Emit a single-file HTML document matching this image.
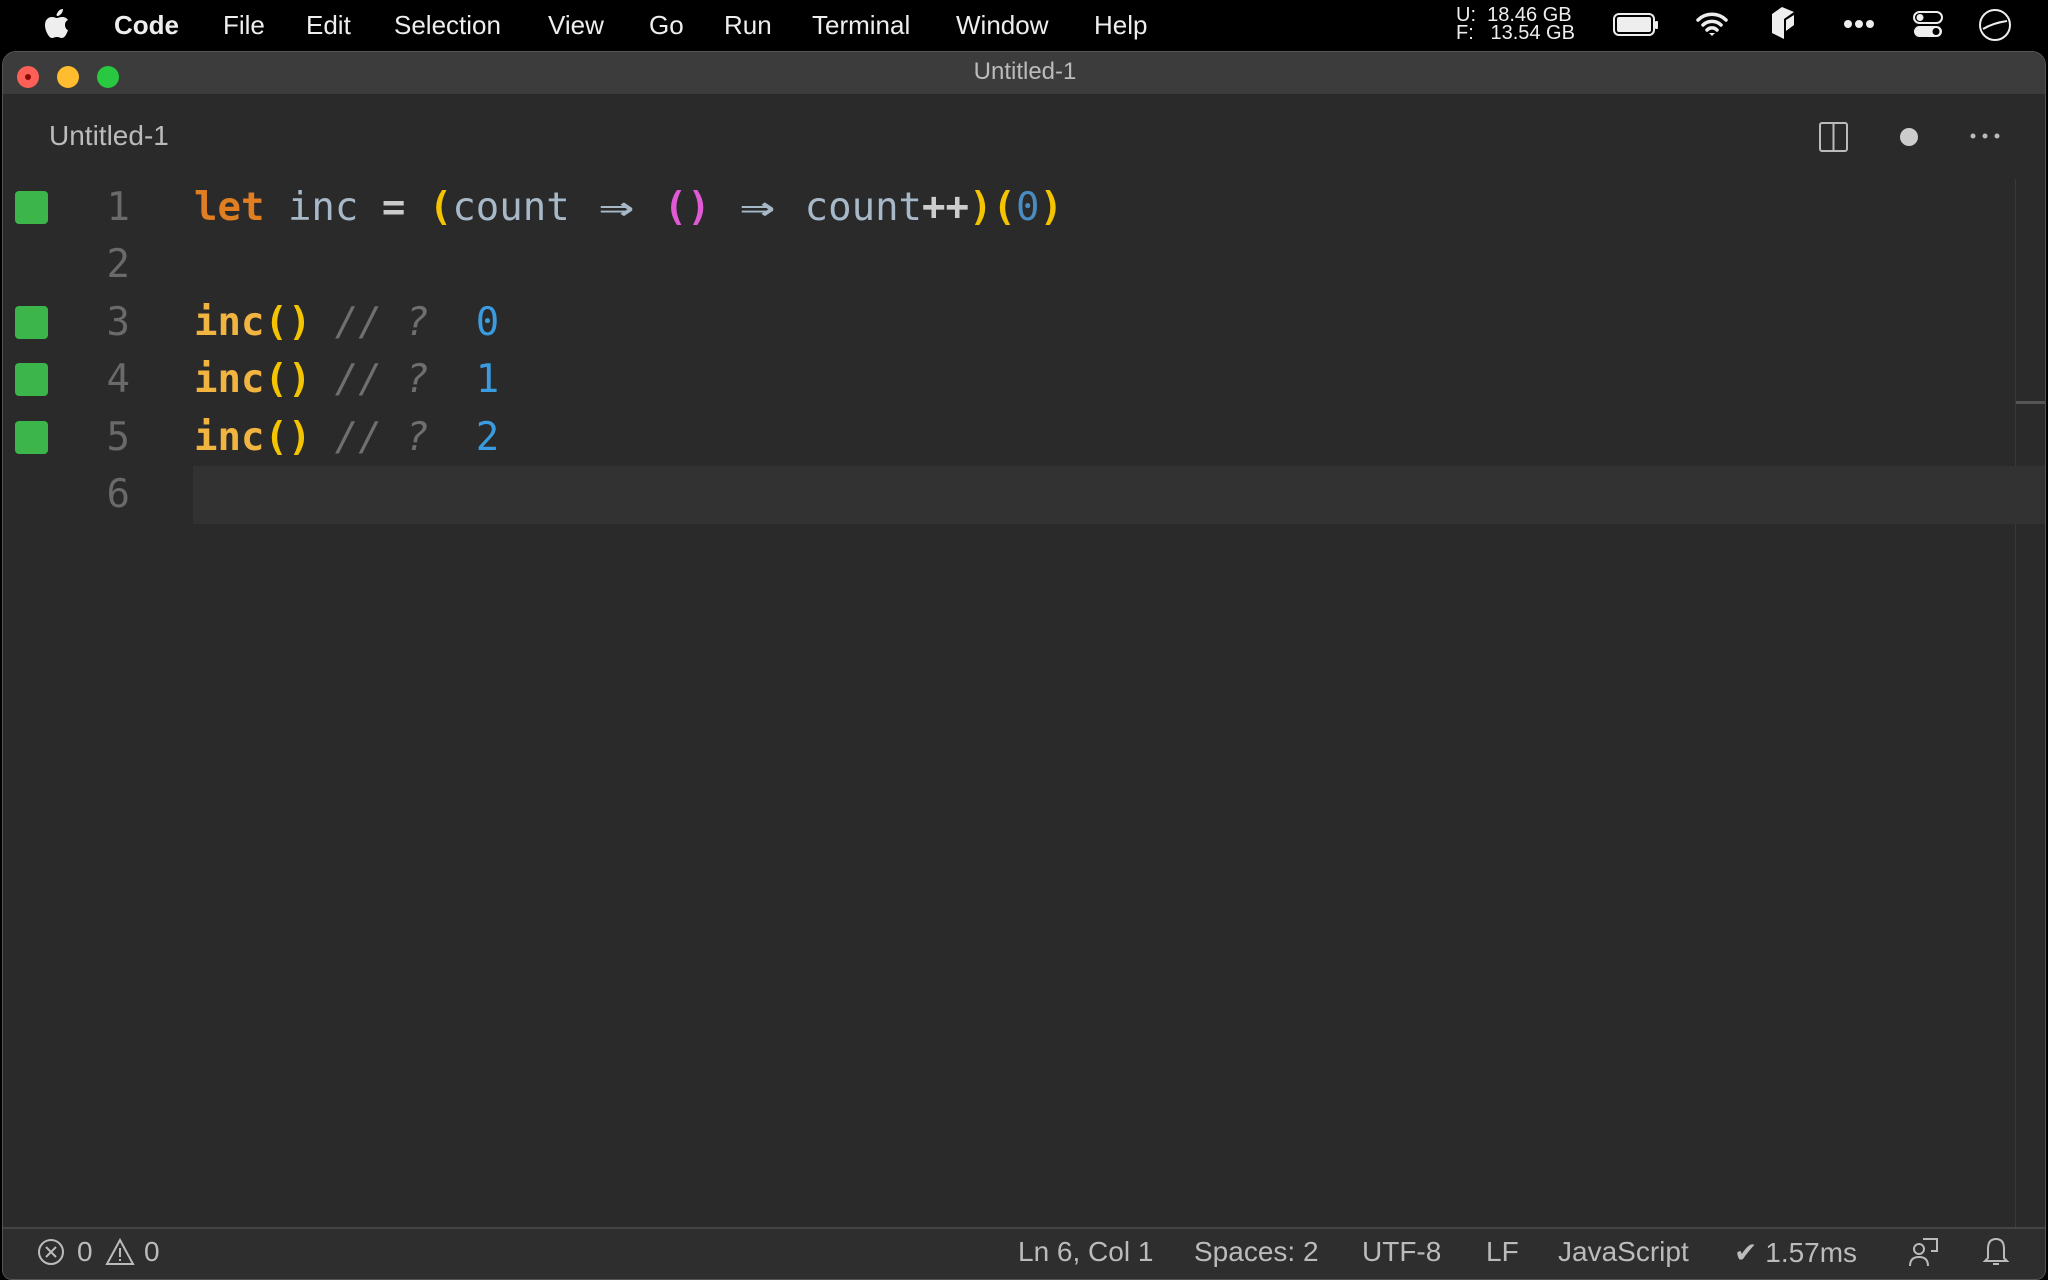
<!DOCTYPE html>
<html><head><meta charset="utf-8"><style>
*{margin:0;padding:0;box-sizing:border-box}
body{width:2048px;height:1280px;background:#000;position:relative;overflow:hidden;font-family:"Liberation Sans",sans-serif}
.a{position:absolute;white-space:nowrap}
.menu{top:10px;font-size:26px;color:#eee}
.win{left:2px;top:51px;width:2044px;height:1229px;background:#2a2a2a;border-radius:14px 14px 10px 10px;overflow:hidden;border:1px solid #555}
.code{font-family:"DejaVu Sans Mono","Liberation Mono",monospace;font-size:39px;font-weight:bold;line-height:57px;white-space:pre}
.ln{color:#6a6a6a;font-weight:normal;width:60px;text-align:right;left:67px}
.sq{left:12px;width:33px;height:33px;background:#3cb54a;border-radius:4px}
.st{top:1236px;font-size:28px;color:#bbb}
.ar{display:inline-block;width:47px;text-align:center;transform:scaleX(1.5);font-weight:bold}
</style></head><body>
<svg class="a" style="left:44px;top:8px" width="26" height="32" viewBox="0 0 26 32"><path fill="#eee" d="M21 17c0-4 3-5 3-5-2-3-5-3-6-3-2 0-4 1-5 1s-3-1-5-1C4 9 1 12 1 17c0 6 4 13 7 13 2 0 2-1 5-1 2 0 3 1 5 1 3 0 5-5 6-8-1 0-3-2-3-5zM17 6c1-1 2-3 2-5-2 0-4 1-5 3-1 1-2 3-1 4 2 0 3-1 4-2z"/></svg>
<div class="a menu" style="left:114px;font-weight:bold">Code</div>
<div class="a menu" style="left:223px">File</div>
<div class="a menu" style="left:306px">Edit</div>
<div class="a menu" style="left:394px">Selection</div>
<div class="a menu" style="left:548px">View</div>
<div class="a menu" style="left:649px">Go</div>
<div class="a menu" style="left:724px">Run</div>
<div class="a menu" style="left:812px">Terminal</div>
<div class="a menu" style="left:956px">Window</div>
<div class="a menu" style="left:1094px">Help</div>
<div class="a" style="left:1456px;top:6px;font-size:20px;line-height:18px;color:#eee">U:&nbsp;&nbsp;18.46 GB<br>F:&nbsp;&nbsp;&nbsp;13.54 GB</div>
<svg class="a" style="left:1612px;top:10px" width="50" height="30"><rect x="2" y="4" width="40" height="21" rx="5" fill="none" stroke="#eee" stroke-width="2"/><rect x="5" y="7" width="34" height="15" rx="2" fill="#eee"/><rect x="43" y="11" width="3" height="8" rx="1" fill="#eee"/></svg>
<svg class="a" style="left:1695px;top:10px" width="34" height="28" viewBox="0 0 34 28"><path d="M3 10a20 20 0 0 1 28 0M8 15a13 13 0 0 1 18 0M12 20a7 7 0 0 1 10 0" fill="none" stroke="#eee" stroke-width="3.5" stroke-linecap="round"/><path d="M14 23l3 3 3-3z" fill="#eee"/></svg>
<svg class="a" style="left:1770px;top:6px" width="28" height="36" viewBox="0 0 28 36"><path d="M2 8l10-7 12 5-10 7v20L2 27z" fill="#eee"/><path d="M16 14l8-5v10l-8 6z" fill="#eee"/></svg>
<svg class="a" style="left:1842px;top:17px" width="34" height="14"><circle cx="6" cy="7" r="4" fill="#eee"/><circle cx="17" cy="7" r="4" fill="#eee"/><circle cx="28" cy="7" r="4" fill="#eee"/></svg>
<svg class="a" style="left:1912px;top:10px" width="34" height="30"><rect x="2" y="2" width="28" height="11" rx="5.5" fill="none" stroke="#eee" stroke-width="2"/><circle cx="8" cy="7.5" r="3.5" fill="#eee"/><rect x="2" y="16" width="28" height="11" rx="5.5" fill="#eee"/><circle cx="24" cy="21.5" r="3.5" fill="#000"/></svg>
<svg class="a" style="left:1978px;top:7px" width="34" height="36"><circle cx="17" cy="18" r="15" fill="none" stroke="#eee" stroke-width="2"/><path d="M5 22q10-6 24-8" fill="none" stroke="#eee" stroke-width="2"/></svg>

<div class="a win">
 <div class="a" style="left:0;top:0;width:2044px;height:42px;background:#3c3c3c"></div>
 <div class="a" style="left:14px;top:14px;width:22px;height:22px;border-radius:50%;background:#fe5f57"><div style="margin:8px;width:6px;height:6px;border-radius:50%;background:#8a0a04"></div></div>
 <div class="a" style="left:54px;top:14px;width:22px;height:22px;border-radius:50%;background:#febc2e"></div>
 <div class="a" style="left:94px;top:14px;width:22px;height:22px;border-radius:50%;background:#28c840"></div>
 <div class="a" style="left:0;width:2044px;text-align:center;top:6px;font-size:24px;color:#bbb">Untitled-1</div>
 <div class="a" style="left:46px;top:68px;font-size:28px;color:#bbb">Untitled-1</div>
 <svg class="a" style="left:1815px;top:69px" width="32" height="32"><rect x="2" y="2" width="27" height="28" rx="2" fill="none" stroke="#bbb" stroke-width="2"/><line x1="15.5" y1="2" x2="15.5" y2="30" stroke="#bbb" stroke-width="2"/></svg>
 <div class="a" style="left:1897px;top:76px;width:18px;height:18px;border-radius:50%;background:#ccc"></div>
 <svg class="a" style="left:1966px;top:80px" width="34" height="8"><circle cx="4" cy="4" r="2.5" fill="#bbb"/><circle cx="16" cy="4" r="2.5" fill="#bbb"/><circle cx="28" cy="4" r="2.5" fill="#bbb"/></svg>
 <div class="a" style="left:2012px;top:127px;width:1px;height:1100px;background:#3a3a3a"></div>
 <div class="a" style="left:2013px;top:349px;width:31px;height:3px;background:#555"></div>
 <div class="a" style="left:190px;top:414px;width:1854px;height:58px;background:#323232"></div>

 <div class="a sq" style="top:139px"></div>
 <div class="a sq" style="top:254px"></div>
 <div class="a sq" style="top:311px"></div>
 <div class="a sq" style="top:369px"></div>
 <div class="a code ln" style="top:127px">1</div>
 <div class="a code ln" style="top:184px">2</div>
 <div class="a code ln" style="top:242px">3</div>
 <div class="a code ln" style="top:299px">4</div>
 <div class="a code ln" style="top:357px">5</div>
 <div class="a code ln" style="top:414px">6</div>
 <div class="a code" style="left:191px;top:127px;color:#a7b9c9"><span style="color:#e07e22">let</span> <span style="font-weight:normal">inc</span> <span style="color:#ccc">=</span> <span style="color:#f5c400">(</span><span style="font-weight:normal">count</span> <span class="ar">⇒</span> <span style="color:#e05ad6">()</span> <span class="ar">⇒</span> <span style="font-weight:normal">count</span><span style="color:#ccc">++</span><span style="color:#f5c400">)(</span><span style="color:#4a8cc0;font-weight:normal">0</span><span style="color:#f5c400">)</span></div>
 <div class="a code" style="left:191px;top:242px;color:#f2b440">inc<span style="color:#f5c400">()</span> <span style="color:#6f6f6f;font-style:italic;font-weight:normal">// ?</span>  <span style="color:#3a9be0;font-weight:normal">0</span></div>
 <div class="a code" style="left:191px;top:299px;color:#f2b440">inc<span style="color:#f5c400">()</span> <span style="color:#6f6f6f;font-style:italic;font-weight:normal">// ?</span>  <span style="color:#3a9be0;font-weight:normal">1</span></div>
 <div class="a code" style="left:191px;top:357px;color:#f2b440">inc<span style="color:#f5c400">()</span> <span style="color:#6f6f6f;font-style:italic;font-weight:normal">// ?</span>  <span style="color:#3a9be0;font-weight:normal">2</span></div>

 <div class="a" style="left:0;top:1175px;width:2044px;height:54px;background:#2e2e2e;border-top:2px solid #444"></div>
</div>
<svg class="a" style="left:37px;top:1238px" width="28" height="28"><circle cx="14" cy="14" r="12" fill="none" stroke="#bbb" stroke-width="2"/><path d="M9 9l10 10M19 9L9 19" stroke="#bbb" stroke-width="2"/></svg>
<div class="a st" style="left:77px">0</div>
<svg class="a" style="left:105px;top:1238px" width="30" height="28"><path d="M15 2L28 26H2z" fill="none" stroke="#bbb" stroke-width="2"/><path d="M15 10v9M15 21v2" stroke="#bbb" stroke-width="2"/></svg>
<div class="a st" style="left:144px">0</div>
<div class="a st" style="left:1018px">Ln 6, Col 1</div>
<div class="a st" style="left:1194px">Spaces: 2</div>
<div class="a st" style="left:1362px">UTF-8</div>
<div class="a st" style="left:1486px">LF</div>
<div class="a st" style="left:1558px">JavaScript</div>
<div class="a st" style="left:1734px">✔ 1.57ms</div>
<svg class="a" style="left:1907px;top:1236px" width="34" height="32"><circle cx="12" cy="13" r="5" fill="none" stroke="#bbb" stroke-width="2"/><path d="M3 30q0-9 9-9t9 9M16 3h14v12h-6" fill="none" stroke="#bbb" stroke-width="2"/></svg>
<svg class="a" style="left:1982px;top:1236px" width="28" height="32"><path d="M14 3q8 0 8 10v9l3 3H3l3-3v-9q0-10 8-10zM11 28h6" fill="none" stroke="#bbb" stroke-width="2"/></svg>
</body></html>
